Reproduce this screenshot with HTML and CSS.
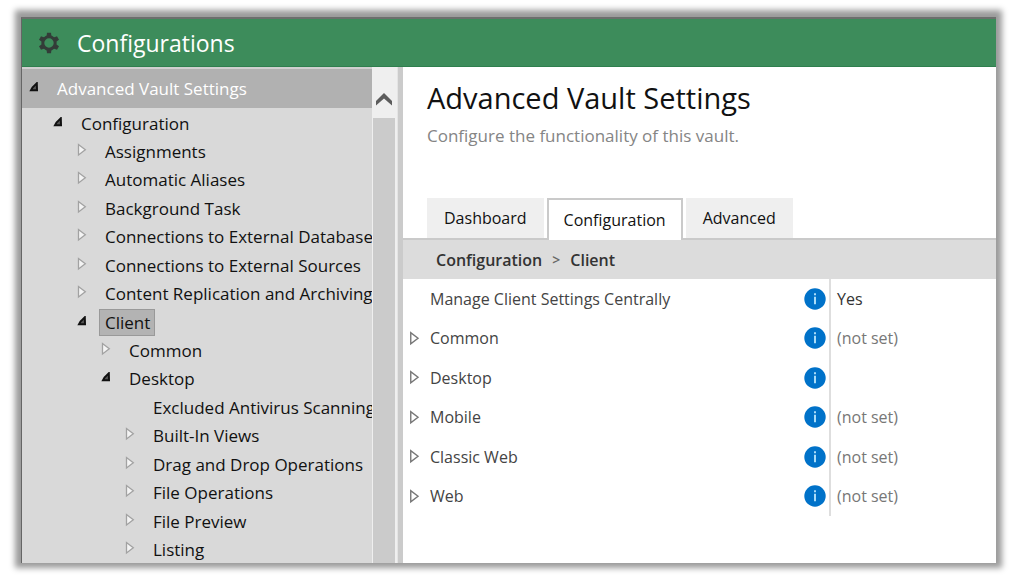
FILE: index.html
```html
<!DOCTYPE html>
<html lang="en">
<head>
<meta charset="utf-8">
<title>Configurations</title>
<link rel="stylesheet" href="styles.css">
</head>
<body>
<svg class="defs" aria-hidden="true">
  <symbol id="closed" viewBox="0 0 10 14"><path d="M1.5 1.5V12L8.3 6.8Z"/></symbol>
  <symbol id="open" viewBox="0 0 10 10"><path d="M7.800 1.300L8 8.300H2L3.500 5.500Z"/></symbol>
  <symbol id="info" viewBox="0 0 22 22"><circle cx="11" cy="11" r="10.7" fill="#0072c9"/><path d="M10 5.3h2v1.9h-2zM10 8.8h2v7.4h-2z" fill="#a9dcf8"/></symbol>
</svg>
<div class="window">
  <header class="titlebar">
    <svg class="gear" viewBox="0 0 22 22" aria-hidden="true">
      <g fill="#333c38"><path d="M9 .8h4l.5 4h-5zM9 21.2h4l.5-4h-5zM1 7.7l2-3.4 4 1.5-2.5 4.4zM21 7.7l-2-3.4-4 1.5 2.5 4.4zM1 14.3l2 3.4 4-1.5-2.5-4.4zM21 14.3l-2 3.4-4-1.5 2.5-4.4z"/></g>
      <circle cx="11" cy="11" r="6.2" fill="none" stroke="#333c38" stroke-width="3"/>
    </svg>
    <h1 class="app-name">Configurations</h1>
  </header>
  <div class="body">
    <nav class="sidebar" aria-label="Settings tree">
      <ul class="tree">
        <li>
          <div class="row root"><button class="toggle open" aria-label="Collapse Advanced Vault Settings"><svg><use href="#open"/></svg></button><a class="label" href="#">Advanced Vault Settings</a></div>
          <ul>
            <li>
              <div class="row"><button class="toggle open" aria-label="Collapse Configuration"><svg><use href="#open"/></svg></button><a class="label" href="#">Configuration</a></div>
              <ul>
                <li><div class="row"><button class="toggle" aria-label="Expand Assignments"><svg><use href="#closed"/></svg></button><a class="label" href="#">Assignments</a></div></li>
                <li><div class="row"><button class="toggle" aria-label="Expand Automatic Aliases"><svg><use href="#closed"/></svg></button><a class="label" href="#">Automatic Aliases</a></div></li>
                <li><div class="row"><button class="toggle" aria-label="Expand Background Task"><svg><use href="#closed"/></svg></button><a class="label" href="#">Background Task</a></div></li>
                <li><div class="row"><button class="toggle" aria-label="Expand Connections to External Databases"><svg><use href="#closed"/></svg></button><a class="label" href="#">Connections to External Databases</a></div></li>
                <li><div class="row"><button class="toggle" aria-label="Expand Connections to External Sources"><svg><use href="#closed"/></svg></button><a class="label" href="#">Connections to External Sources</a></div></li>
                <li><div class="row"><button class="toggle" aria-label="Expand Content Replication and Archiving"><svg><use href="#closed"/></svg></button><a class="label" href="#">Content Replication and Archiving</a></div></li>
                <li>
                  <div class="row"><button class="toggle open" aria-label="Collapse Client"><svg><use href="#open"/></svg></button><a class="label selected" href="#" aria-current="page">Client</a></div>
                  <ul>
                    <li><div class="row"><button class="toggle" aria-label="Expand Common"><svg><use href="#closed"/></svg></button><a class="label" href="#">Common</a></div></li>
                    <li>
                      <div class="row"><button class="toggle open" aria-label="Collapse Desktop"><svg><use href="#open"/></svg></button><a class="label" href="#">Desktop</a></div>
                      <ul>
                        <li><div class="row leaf"><a class="label" href="#">Excluded Antivirus Scanning</a></div></li>
                        <li><div class="row"><button class="toggle" aria-label="Expand Built-In Views"><svg><use href="#closed"/></svg></button><a class="label" href="#">Built-In Views</a></div></li>
                        <li><div class="row"><button class="toggle" aria-label="Expand Drag and Drop Operations"><svg><use href="#closed"/></svg></button><a class="label" href="#">Drag and Drop Operations</a></div></li>
                        <li><div class="row"><button class="toggle" aria-label="Expand File Operations"><svg><use href="#closed"/></svg></button><a class="label" href="#">File Operations</a></div></li>
                        <li><div class="row"><button class="toggle" aria-label="Expand File Preview"><svg><use href="#closed"/></svg></button><a class="label" href="#">File Preview</a></div></li>
                        <li><div class="row"><button class="toggle" aria-label="Expand Listing"><svg><use href="#closed"/></svg></button><a class="label" href="#">Listing</a></div></li>
                      </ul>
                    </li>
                  </ul>
                </li>
              </ul>
            </li>
          </ul>
        </li>
      </ul>
      <div class="scrollbar">
        <button class="scroll-up" aria-label="Scroll up"><svg viewBox="0 0 18 14"><path d="M1 13.500V9L9 1l8 8V13.500L9 6.500Z" fill="#5c5c5c"/></svg></button>
        <div class="thumb"></div>
      </div>
    </nav>
    <main class="main">
      <h2 class="heading">Advanced Vault Settings</h2>
      <p class="subheading">Configure the functionality of this vault.</p>
      <div class="tabs" role="tablist">
        <button class="tab" role="tab">Dashboard</button>
        <button class="tab active" role="tab" aria-selected="true">Configuration</button>
        <button class="tab" role="tab">Advanced</button>
      </div>
      <nav class="crumbs" aria-label="Breadcrumb"><a href="#">Configuration</a><span class="sep">&gt;</span><a href="#">Client</a></nav>
      <table class="settings">
        <tr><td class="expand"></td><th scope="row">Manage Client Settings Centrally</th><td class="help"><button aria-label="About Manage Client Settings Centrally"><svg><use href="#info"/></svg></button></td><td class="value set">Yes</td></tr>
        <tr><td class="expand"><button aria-label="Expand Common"><svg><use href="#closed"/></svg></button></td><th scope="row">Common</th><td class="help"><button aria-label="About Common"><svg><use href="#info"/></svg></button></td><td class="value">(not set)</td></tr>
        <tr><td class="expand"><button aria-label="Expand Desktop"><svg><use href="#closed"/></svg></button></td><th scope="row">Desktop</th><td class="help"><button aria-label="About Desktop"><svg><use href="#info"/></svg></button></td><td class="value"></td></tr>
        <tr><td class="expand"><button aria-label="Expand Mobile"><svg><use href="#closed"/></svg></button></td><th scope="row">Mobile</th><td class="help"><button aria-label="About Mobile"><svg><use href="#info"/></svg></button></td><td class="value">(not set)</td></tr>
        <tr><td class="expand"><button aria-label="Expand Classic Web"><svg><use href="#closed"/></svg></button></td><th scope="row">Classic Web</th><td class="help"><button aria-label="About Classic Web"><svg><use href="#info"/></svg></button></td><td class="value">(not set)</td></tr>
        <tr><td class="expand"><button aria-label="Expand Web"><svg><use href="#closed"/></svg></button></td><th scope="row">Web</th><td class="help"><button aria-label="About Web"><svg><use href="#info"/></svg></button></td><td class="value">(not set)</td></tr>
      </table>
    </main>
  </div>
</div>
</body>
</html>
```

FILE: styles.css
```css
* { box-sizing: border-box; }
body {
  margin: 0;
  padding: 17px 21px 16px;
  height: 100vh;
  overflow: hidden;
  background: #fff;
  color: #111;
  font: 17px/24px "Open Sans", "Noto Sans", sans-serif;
}
ul { list-style: none; margin: 0; padding: 0; }
h1, h2, p { margin: 0; font-weight: 400; }
a { color: inherit; text-decoration: none; }
button { font: inherit; color: inherit; border: 0; padding: 0; background: none; }
svg { display: block; }
.defs { position: absolute; width: 0; height: 0; }

.window {
  height: 100%;
  display: flex;
  flex-direction: column;
  border-top: 2px solid #6c6f6d;
  border-left: 1px solid #666;
  background: #fff;
  box-shadow: 0 -1px 6px 6px #9b9b9b;
}
.titlebar {
  flex: none;
  display: flex;
  align-items: center;
  gap: 17px;
  height: 48px;
  padding-left: 16px;
  background: #3d8c5b;
  border-bottom: 1px solid #2f7f4e;
  color: #fff;
}
.gear { width: 22px; height: 22px; }
.app-name { font-size: 23px; line-height: 32px; }

.body { flex: 1; display: flex; min-height: 0; }
.sidebar {
  flex: none;
  display: flex;
  width: 381px;
  background: #d9d9d9;
  border-right: 5px solid #cbcbcb;
}
.tree { flex: 1; min-width: 0; overflow: hidden; }
.row {
  display: flex;
  align-items: center;
  height: 28px;
  white-space: nowrap;
}
li:nth-child(even) > .row { height: 29px; }
.row.root {
  height: 41px;
  margin-bottom: 1px;
  background: #b1b1b1;
  border-top: 2px solid #d0d0d0;
  color: #fff;
}
.row { padding-left: 7px; }
.tree ul .row { padding-left: 31px; }
.tree ul ul .row { padding-left: 55px; }
.tree ul ul ul .row { padding-left: 79px; }
.tree ul ul ul ul .row { padding-left: 103px; }
.tree ul ul ul ul .row.leaf { padding-left: 125px; }
.toggle { flex: none; width: 22px; padding-bottom: 3px; }
.toggle svg { width: 10px; height: 14px; fill: #f4f4f4; stroke: #a2a2a2; stroke-width: 1.3px; }
.toggle.open svg { width: 10px; height: 10px; fill: #555; stroke: #111; stroke-width: 2px; }
.label { padding: 0 4px 0 5px; border: 1px solid transparent; line-height: 25px; }
.label.selected { background: #b3b3b3; border-color: #999; }

.scrollbar {
  flex: none;
  display: flex;
  flex-direction: column;
  width: 26px;
  padding: 0 2px 0 1px;
  border-right: 1px solid #e4e4e4;
  background: #efefef;
}
.scroll-up { flex: none; height: 51px; padding: 12px 2px 0; }
.scroll-up svg { width: 18px; height: 14px; }
.thumb { flex: 1; background: #cbcbcb; }

.main { flex: 1; min-width: 0; }
.heading { padding: 11px 24px 0; font-size: 29px; line-height: 40px; }
.subheading { padding: 6px 24px 0; color: #858585; }
.tabs {
  display: flex;
  gap: 3px;
  margin-top: 50px;
  padding: 0 24px;
  border-bottom: 2px solid #cacaca;
  font-size: 16px;
}
.tab { height: 40px; padding: 0 17px; background: #efefef; }
.tab.active {
  height: 42px;
  margin-bottom: -2px;
  padding: 0 15px;
  border: 2px solid #cacaca;
  border-bottom: 0;
  background: #fff;
}
.crumbs {
  display: flex;
  align-items: center;
  gap: 10px;
  height: 39px;
  padding: 0 33px;
  background: #dcdcdc;
  color: #333;
  font-size: 16px;
  font-weight: 600;
}
.sep { font-size: 14px; color: #666; }

.settings { width: 100%; border-collapse: collapse; table-layout: fixed; font-size: 16px; color: #444; }
.settings tr { height: 40px; }
.settings tr:nth-child(odd) { height: 39px; }
.settings td, .settings th { padding: 0; text-align: left; font-weight: 400; vertical-align: middle; }
.expand { width: 27px; }
.settings .expand { padding-left: 6px; }
.expand svg { width: 11px; height: 15px; fill: #fff; stroke: #777; stroke-width: 1.3px; }
.help { width: 26px; }
.help button, .expand button { display: block; }
.help svg { width: 22px; height: 22px; }
.value { width: 28%; }
.settings .value { padding-left: 6px; border-left: 2px solid #dedede; color: #777; }
.settings .value.set { color: #333; }
```
